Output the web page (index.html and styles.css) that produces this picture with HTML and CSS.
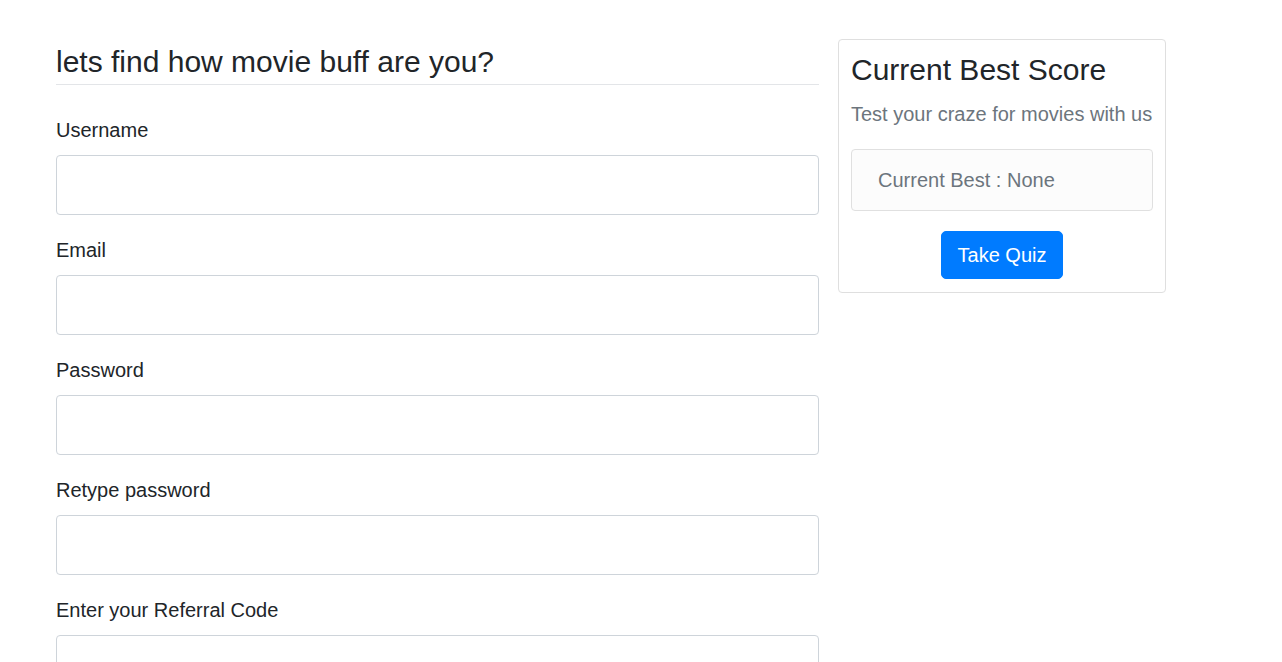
FILE: index.html
```html
<!DOCTYPE html>
<html>
<head>
<meta charset="utf-8">
<link rel="stylesheet" href="styles.css">
</head>
<body>
<div class="page">
  <div class="main">
    <h3 class="title">lets find how movie buff are you?</h3>
    <form class="form">
      <div class="group"><label>Username</label><input class="field" type="text"></div>
      <div class="group"><label>Email</label><input class="field" type="email"></div>
      <div class="group"><label>Password</label><input class="field" type="password"></div>
      <div class="group"><label>Retype password</label><input class="field" type="password"></div>
      <div class="group"><label>Enter your Referral Code</label><input class="field" type="text"></div>
    </form>
  </div>
  <div class="side">
    <div class="card">
      <h3 class="card-title">Current Best Score</h3>
      <p class="card-sub">Test your craze for movies with us</p>
      <div class="best">Current Best : None</div>
      <div class="actions"><button class="btn" type="button">Take Quiz</button></div>
    </div>
  </div>
</div>
</body>
</html>
```
FILE: styles.css
```css
html, body {
  margin: 0;
  padding: 0;
  background: #fff;
  color: #212529;
  font-family: "Liberation Sans", Arial, sans-serif;
}
.page {
  display: flex;
  align-items: flex-start;
  gap: 19px;
  padding-left: 56px;
  height: 662px;
  overflow: hidden;
}
.main {
  width: 763px;
  padding-top: 44px;
}
.title {
  margin: 0;
  font-size: 30px;
  font-weight: 400;
  line-height: 36px;
  padding-bottom: 4px;
  border-bottom: 1px solid #e3e5e8;
}
.form {
  margin-top: 30px;
}
.group {
  display: flex;
  flex-direction: column;
  margin-bottom: 20px;
}
.group label {
  font-size: 20px;
  line-height: 30px;
  margin-bottom: 10px;
}
.field {
  box-sizing: border-box;
  height: 60px;
  width: 100%;
  border: 1px solid #ced4da;
  border-radius: 4px;
  background: #fff;
  font-size: 20px;
  padding: 0 16px;
  margin: 0;
}
.side {
  width: 328px;
  padding-top: 39px;
}
.card {
  border: 1px solid #dfdfdf;
  border-radius: 4px;
  padding: 12px 12px 13px;
}
.card-title {
  margin: 0;
  font-size: 30px;
  font-weight: 400;
  line-height: 36px;
}
.card-sub {
  margin: 11px 0 0;
  font-size: 20px;
  line-height: 30px;
  color: #6c757d;
  white-space: nowrap;
}
.best {
  margin-top: 20px;
  box-sizing: border-box;
  height: 62px;
  border: 1px solid #e0e0e0;
  border-radius: 4px;
  background: #fcfcfc;
  display: flex;
  align-items: center;
  padding-left: 26px;
  font-size: 20px;
  color: #6c757d;
}
.actions {
  display: flex;
  justify-content: center;
  margin-top: 20px;
}
.btn {
  font-family: inherit;
  font-size: 20px;
  line-height: 30px;
  padding: 8px 16px;
  border: 1px solid #007bff;
  background: #007bff;
  color: #fff;
  border-radius: 5px;
  cursor: pointer;
}
```
